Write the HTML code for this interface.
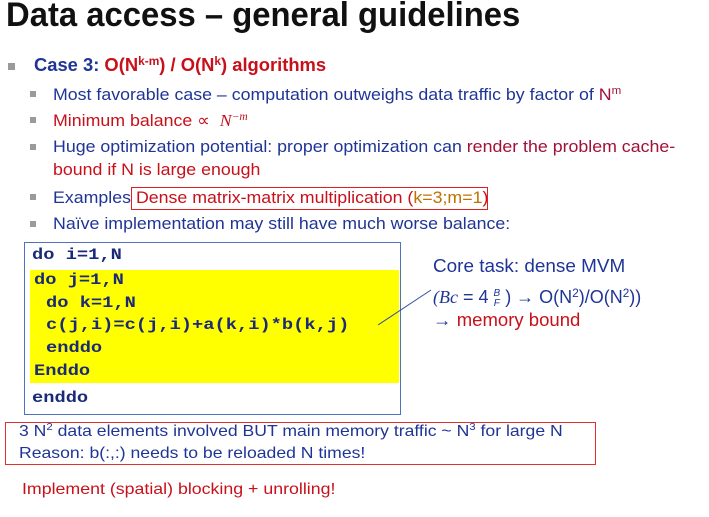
<!DOCTYPE html>
<html><head><meta charset="utf-8"><style>
body{margin:0;width:709px;height:517px;background:#fff;position:relative;overflow:hidden;font-family:"Liberation Sans",sans-serif;}
.a{position:absolute;white-space:nowrap;transform-origin:left top;}
.b{color:#1f3596}.r{color:#c8101a}.m{color:#a0103a}
.sq{position:absolute;width:6px;height:6px;background:#9a9a9a}
.code{font-family:"Liberation Mono",monospace;font-weight:bold;font-size:16px;color:#1a2a78;transform:scaleX(1.17)}
sup{font-size:65%;vertical-align:6px;line-height:0}
.t{font-size:17px;transform:scaleX(1.045)}
</style></head><body>
<div class="a" style="left:6px;top:-4px;font-size:34px;font-weight:bold;color:#111;transform:scaleX(0.965)">Data access – general guidelines</div>

<div class="sq" style="left:8px;top:63px;width:7px;height:7px"></div>
<div class="a" style="left:34px;top:55px;font-size:18px;font-weight:bold;transform:scaleX(1.02)"><span class="b">Case 3: </span><span class="r">O(N<sup>k-m</sup>) / O(N<sup>k</sup>) algorithms</span></div>

<div class="sq" style="left:30px;top:91px"></div>
<div class="a b t" style="left:53px;top:85px">Most favorable case – computation outweighs data traffic by factor of <span class="m">N<sup>m</sup></span></div>
<div class="sq" style="left:30px;top:117px"></div>
<div class="a r t" style="left:53px;top:111px">Minimum balance ∝ &nbsp;<i style="font-family:'Liberation Serif',serif">N<sup>−m</sup></i></div>
<div class="sq" style="left:30px;top:144px"></div>
<div class="a b t" style="left:53px;top:137px">Huge optimization potential: proper optimization can <span class="m">render the problem cache-</span></div>
<div class="a r t" style="left:53px;top:160px">bound if N is large enough</div>
<div class="sq" style="left:30px;top:194px"></div>
<div class="a b t" style="left:53px;top:188px">Examples <span class="r">Dense matrix-matrix multiplication (</span><span style="color:#c07000">k=3;m=1</span><span class="r">)</span></div>
<div style="position:absolute;left:131px;top:187px;width:355px;height:21px;border:1px solid #e02020"></div>
<div class="sq" style="left:30px;top:221px"></div>
<div class="a b t" style="left:53px;top:214px">Naïve implementation may still have much worse balance:</div>

<div style="position:absolute;left:24px;top:242px;width:375px;height:171px;border:1px solid #5070c0"></div>
<div style="position:absolute;left:30px;top:270px;width:369px;height:113px;background:#ffff00"></div>
<div class="a code" style="left:32px;top:246px">do i=1,N</div>
<div class="a code" style="left:34px;top:271px">do j=1,N</div>
<div class="a code" style="left:46px;top:294px">do k=1,N</div>
<div class="a code" style="left:46px;top:316px">c(j,i)=c(j,i)+a(k,i)*b(k,j)</div>
<div class="a code" style="left:46px;top:339px">enddo</div>
<div class="a code" style="left:34px;top:362px">Enddo</div>
<div class="a code" style="left:32px;top:389px">enddo</div>

<svg style="position:absolute;left:0;top:0" width="709" height="517"><line x1="431" y1="290" x2="378" y2="325" stroke="#3050a0" stroke-width="1"/></svg>
<div class="a b" style="left:433px;top:256px;font-size:18px;transform:scaleX(1.05)">Core task: dense MVM</div>
<div class="a b" style="left:433px;top:287px;font-size:18px;transform:scaleX(1.0)"><i style="font-family:'Liberation Serif',serif">(Bc</i> = 4 <span style="display:inline-block;font-size:10px;line-height:10px;vertical-align:-3px;text-align:center"><i>B</i><br><i>F</i></span> ) → O(N<sup>2</sup>)/O(N<sup>2</sup>))</div>
<div class="a" style="left:433px;top:310px;font-size:18px;transform:scaleX(1.03)"><span class="b">→ </span><span class="r">memory bound</span></div>

<div style="position:absolute;left:5px;top:422px;width:589px;height:41px;border:1px solid #e03030"></div>
<div class="a b" style="left:19px;top:423px;font-size:16px;transform:scaleX(1.1)">3 N<sup>2</sup> data elements involved BUT main memory traffic ~ N<sup>3</sup> for large N</div>
<div class="a b" style="left:19px;top:445px;font-size:16px;transform:scaleX(1.1)">Reason: b(:,:) needs to be reloaded N times!</div>
<div class="a r" style="left:22px;top:481px;font-size:16px;transform:scaleX(1.11)">Implement (spatial) blocking + unrolling!</div>
</body></html>
